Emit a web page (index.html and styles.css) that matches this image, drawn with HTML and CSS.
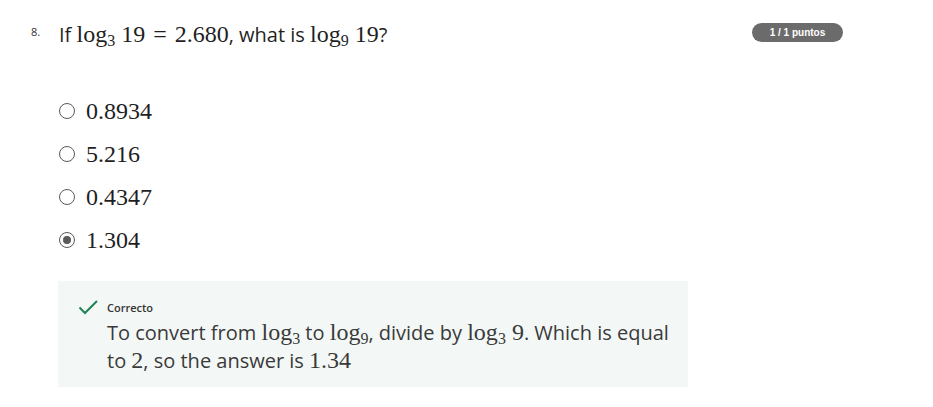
FILE: index.html
```html
<!DOCTYPE html>
<html>
<head>
<meta charset="utf-8">
<link rel="stylesheet" href="styles.css">
</head>
<body>
<div class="question">
  <div class="head">
    <div class="num">8.</div>
    <div class="prompt">If <span class="m">log<sub>3</sub> 19<span class="rel">=</span>2.680</span>, what is <span class="m">log<sub>9</sub> 19</span>?</div>
    <div class="badge">1 / 1 puntos</div>
  </div>
  <div class="options">
    <div class="opt"><span class="radio"></span><span class="m">0.8934</span></div>
    <div class="opt"><span class="radio"></span><span class="m">5.216</span></div>
    <div class="opt"><span class="radio"></span><span class="m">0.4347</span></div>
    <div class="opt"><span class="radio checked"></span><span class="m">1.304</span></div>
  </div>
  <div class="feedback">
    <div class="fhead">
      <svg class="check" width="20" height="16" viewBox="0 0 20 16"><path d="M1.5 8.5 L7 14 L19 2" fill="none" stroke="#1f8354" stroke-width="2"/></svg>
      <span class="label">Correcto</span>
    </div>
    <div class="ftext">To convert from <span class="m">log<sub>3</sub></span> to <span class="m">log<sub>9</sub></span>, divide by <span class="m">log<sub>3</sub> 9</span>. Which is equal to <span class="m">2</span>, so the answer is <span class="m">1.34</span></div>
  </div>
</div>
</body>
</html>
```
FILE: styles.css
```css
body {
  margin: 0;
  background: #fff;
  font-family: "Open Sans", sans-serif;
  color: #1f1f1f;
}
.question {
  padding-top: 21px;
}
.head {
  display: flex;
  align-items: flex-start;
  width: 843px;
}
.num {
  font-size: 11px;
  line-height: 14px;
  color: #333;
  margin-left: 31px;
  width: 28px;
  padding-top: 4px;
}
.prompt {
  flex: 1;
  font-size: 20px;
  line-height: 28px;
  height: 28px;
  color: #1f1f1f;
}
.m {
  font-family: "Liberation Serif", serif;
  font-size: 24px;
  line-height: 1;
}
.m sub {
  font-size: 16px;
  vertical-align: -4px;
  line-height: 1;
}
.rel {
  margin: 0 8px;
}
.badge {
  margin-top: 2px;
  background: #6b6b6b;
  color: #fff;
  font-family: "Liberation Sans", sans-serif;
  font-weight: bold;
  font-size: 10px;
  line-height: 19px;
  height: 19px;
  width: 91px;
  text-align: center;
  border-radius: 10px;
}
.options {
  margin-top: 48px;
  margin-left: 59px;
  display: flex;
  flex-direction: column;
  gap: 15px;
}
.opt {
  display: flex;
  align-items: center;
  gap: 11px;
  height: 28px;
  color: #1f1f1f;
}
.radio {
  width: 16px;
  height: 16px;
  border: 1.5px solid #5a5a5a;
  border-radius: 50%;
  box-sizing: border-box;
  position: relative;
}
.radio.checked::after {
  content: "";
  position: absolute;
  left: 2.5px;
  top: 2.5px;
  width: 8px;
  height: 8px;
  background: #5a5a5a;
  border-radius: 50%;
}
.feedback {
  margin: 27px 0 0 58px;
  width: 630px;
  background: #f3f8f6;
  padding: 18px 0 12px 20px;
  box-sizing: border-box;
}
.fhead {
  display: flex;
  align-items: center;
  gap: 9px;
  height: 16px;
}
.label {
  font-size: 11px;
  font-weight: 600;
  color: #333;
}
.ftext {
  margin-left: 29px;
  margin-top: 4px;
  font-size: 20px;
  line-height: 28px;
  color: #3a3a3a;
  width: 570px;
}
.ftext .m { font-size: 24px; }
```
